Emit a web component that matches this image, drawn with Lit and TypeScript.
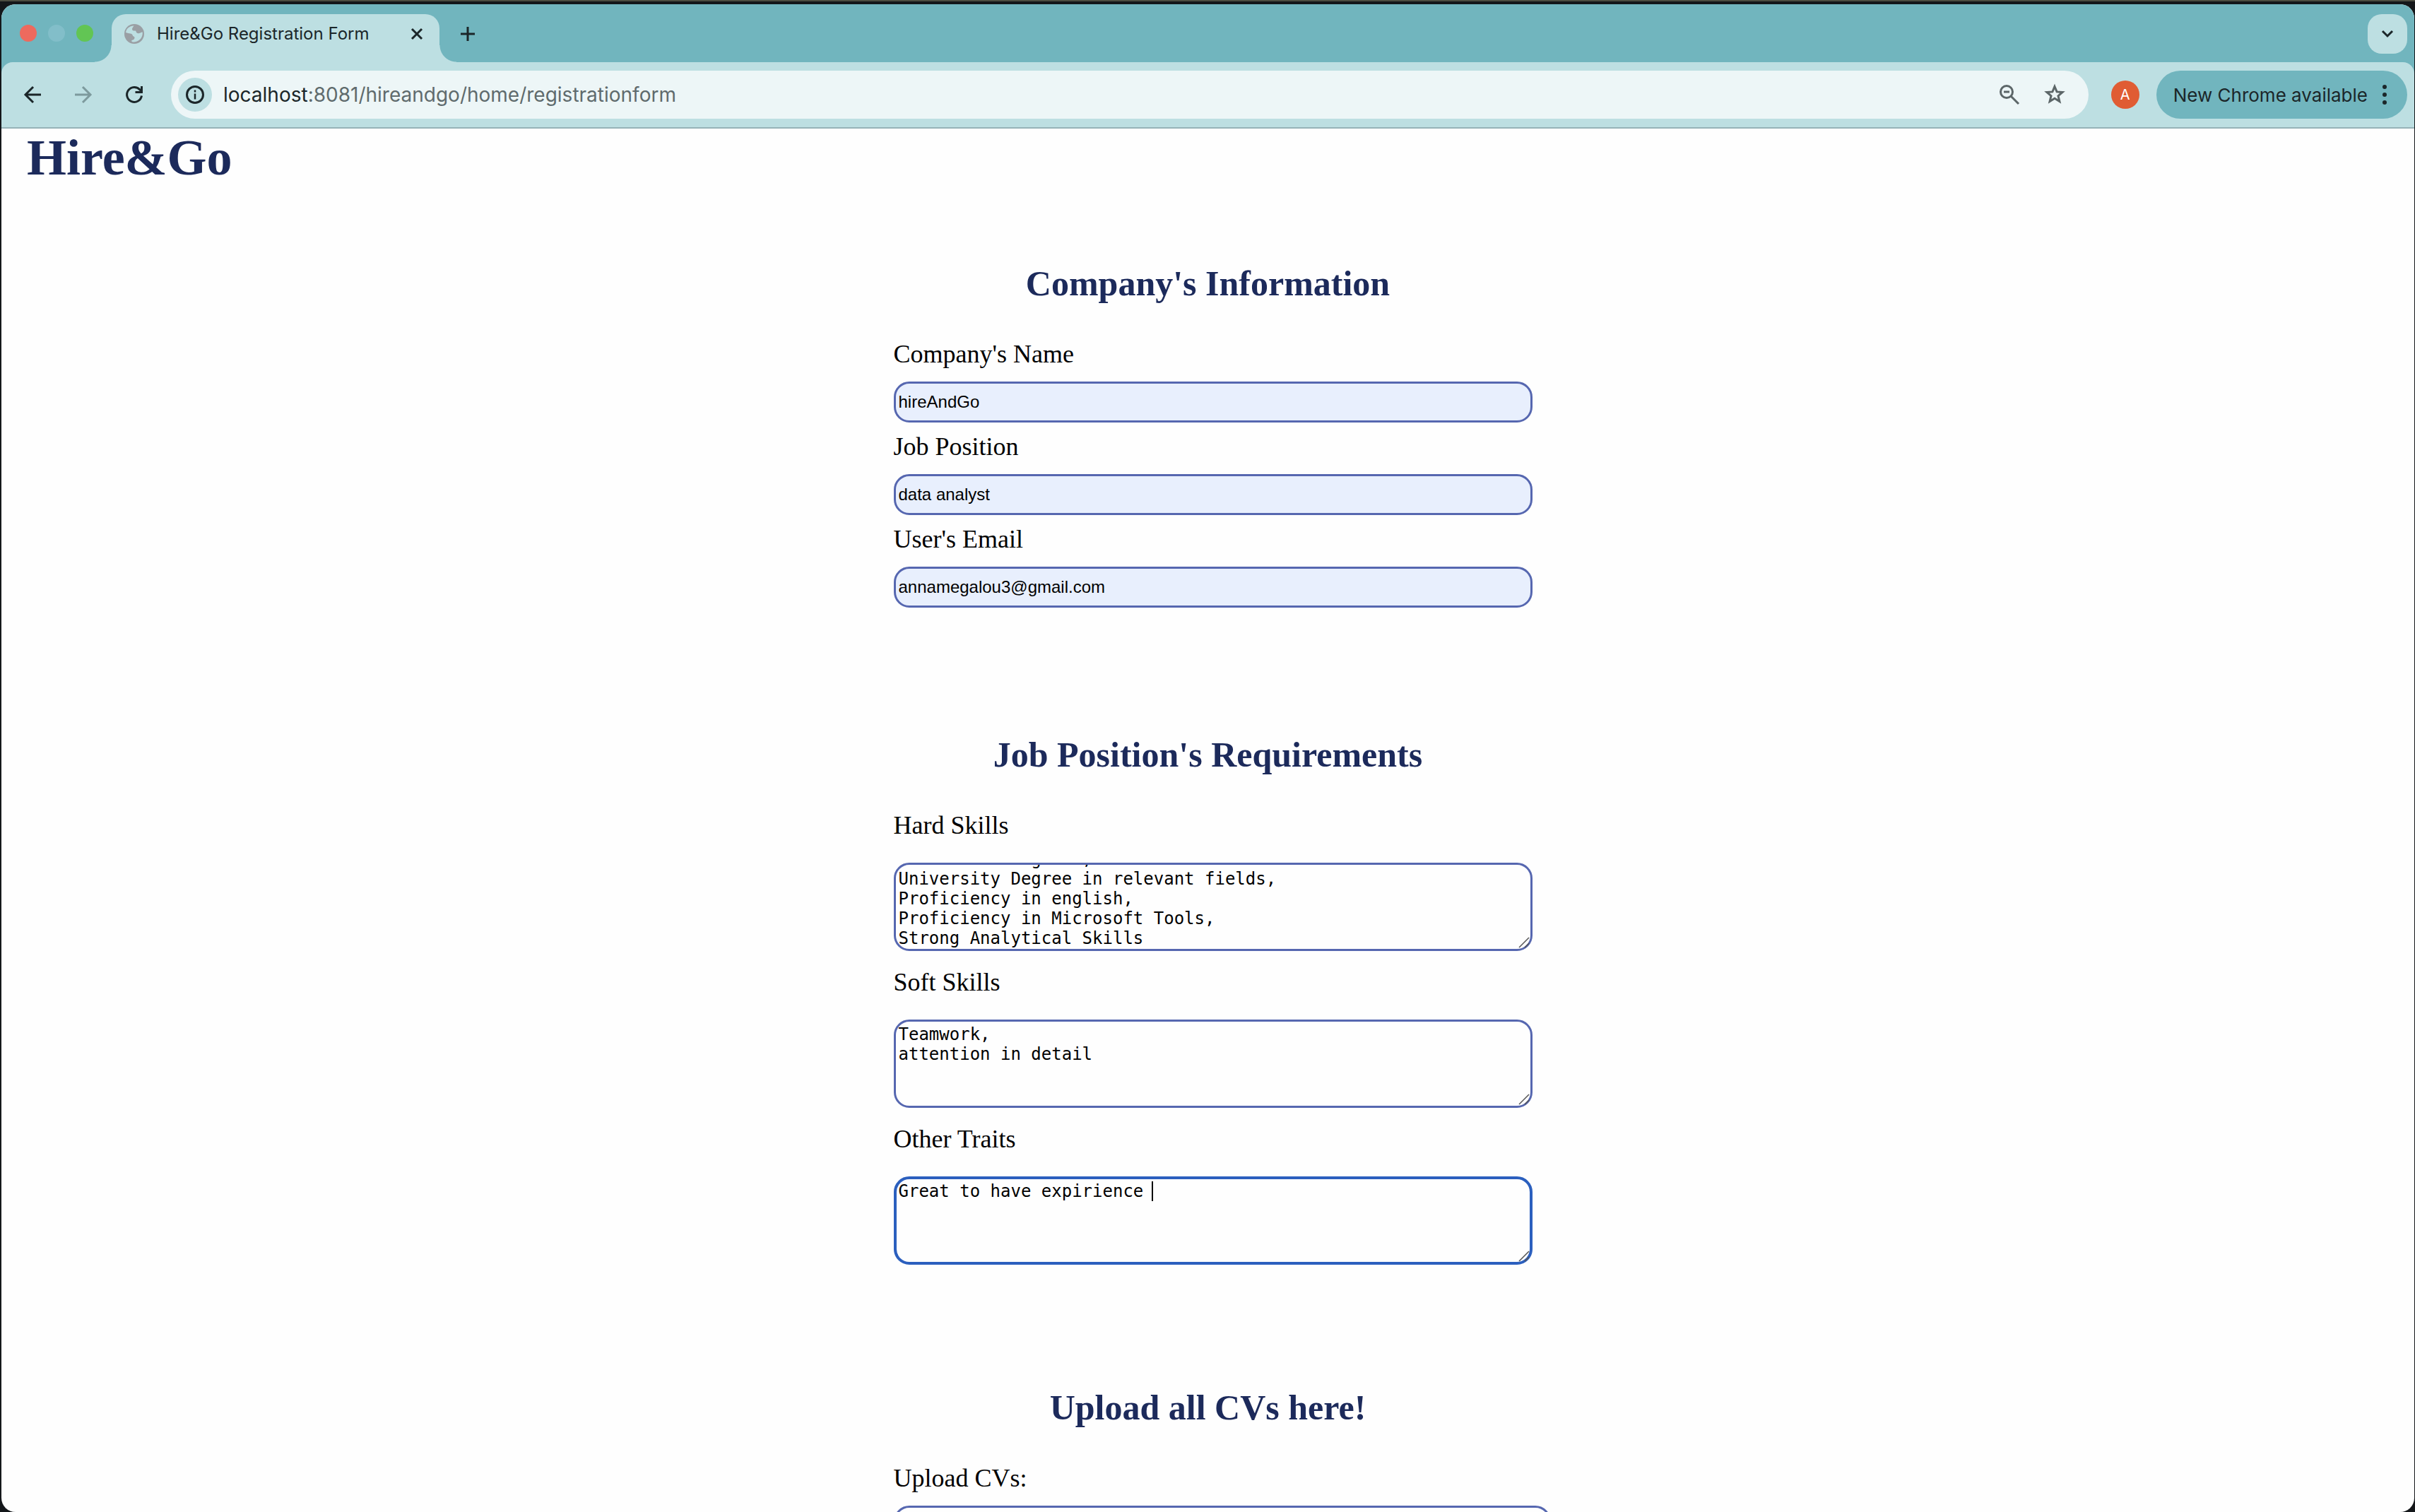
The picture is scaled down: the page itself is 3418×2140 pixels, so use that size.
import { LitElement, html, css, svg } from "lit";
import { customElement, state } from "lit/decorators.js";

const icon = (body: unknown) => html`
  <svg class="icon" viewBox="0 0 32 32" fill="none" stroke="currentColor" stroke-width="3" aria-hidden="true">${body}</svg>`;

@customElement("browser-chrome")
export class BrowserChrome extends LitElement {
  static styles = css`
    :host { display: block; font-family: Inter, "Liberation Sans", sans-serif; color: #1b2629; }
    * { box-sizing: border-box; }
    button { border: 0; padding: 0; background: none; color: inherit; font: inherit; display: flex; align-items: center; justify-content: center; flex: none; }
    .icon { display: block; flex: none; width: 32px; height: 32px; }
    .tabs { display: flex; height: 82px; background: #71b5be; padding: 14px 10px 0 26px; align-items: flex-start; }
    .lights { display: flex; gap: 16px; padding-top: 15px; margin-right: 26px; }
    .light { width: 24px; height: 24px; border-radius: 50%; }
    .close { background: #ed6a5e; }
    .min { background: #82bec9; }
    .max { background: #62c554; }
    .tab { position: relative; display: flex; align-items: center; width: 464px; height: 68px; padding: 0 16px 12px 16px; background: #bddfe2; border-radius: 20px 20px 0 0; font-size: 24px; line-height: 32px; white-space: nowrap; }
    .tab::before, .tab::after { content: ""; position: absolute; bottom: 0; width: 24px; height: 24px; }
    .tab::before { right: 100%; background: radial-gradient(circle at 0 0, transparent 23px, #bddfe2 24px); }
    .tab::after { left: 100%; background: radial-gradient(circle at 100% 0, transparent 23px, #bddfe2 24px); }
    .title { flex: 1; margin-left: 16px; }
    .plus { width: 32px; height: 56px; margin-left: 24px; }
    .down { width: 56px; height: 56px; margin-left: auto; border-radius: 20px; background: #bddfe2; }
    .corner { background: #71b5be; }
    .bar { display: flex; align-items: center; height: 94px; padding: 0 10px 0 28px; background: #bddfe2; border-bottom: 2px solid #96b3b8; border-radius: 16px 16px 0 0; }
    .nav { display: flex; gap: 40px; margin-right: 36px; }
    .muted { color: #7d9a9d; }
    .omni { flex: 1; display: flex; align-items: center; height: 68px; padding: 0 32px 0 10px; border-radius: 34px; background: #edf6f7; }
    .info { width: 48px; height: 48px; border-radius: 50%; background: #bddfe2; }
    .address { flex: 1; margin-left: 16px; font-size: 28px; line-height: 40px; }
    .url { display: block; color: #5f6b6d; }
    .host { color: #1b2629; }
    .grey { color: #5c6668; }
    .star { margin-left: 32px; }
    .avatar { width: 40px; height: 40px; margin: 0 24px 0 32px; border-radius: 50%; background: #e05c33; color: #fff; font-size: 20px; }
    .update { height: 68px; padding: 0 16px 0 24px; border-radius: 34px; background: #71b5be; font-size: 26px; gap: 8px; }
  `;

  render() {
    return html`
      <header>
        <div class="tabs">
          <div class="lights"><span class="light close"></span><span class="light min"></span><span class="light max"></span></div>
          <div class="tab">
            ${icon(svg`<circle cx="16" cy="16" r="14" fill="#9a9fa4" stroke="none"/><path d="M4 14C5 8 9 5 15.500 4.500L13.500 7.500C12.500 9 13 11 15 11.500C17 12 18 10.500 18.500 12.500C19 15 21 15.500 23 15C25 14.500 26 13 27.700 13.500C28.500 20 24 27 15.500 27.500C12 27.500 12 26 12.500 25C15 24.500 16 24 16.500 21.500C17 19.500 14 20 13.500 17.500C13 15 9 16 4 14Z" fill="#bddfe2" stroke="none"/>`)}
            <span class="title">Hire&amp;Go Registration Form</span>
            <button aria-label="Close tab">${icon(svg`<path d="M9 9l14 14M23 9L9 23"/>`)}</button>
          </div>
          <button class="plus" aria-label="New tab">${icon(svg`<path d="M16 6v20M6 16h20"/>`)}</button>
          <button class="down" aria-label="Search tabs">${icon(svg`<path d="M9 12l7 7 7-7"/>`)}</button>
        </div>
        <div class="corner">
          <div class="bar">
            <div class="nav">
              <button aria-label="Back">${icon(svg`<path d="M28 16H7M17 5L6 16l11 11"/>`)}</button>
              <button class="muted" aria-label="Forward">${icon(svg`<path d="M4 16h21M15 5l11 11-11 11"/>`)}</button>
              <button aria-label="Reload">${icon(svg`<path d="M26.500 17.500A10.500 10.500 0 1 1 24 9l2.500 2.500M26.500 4v8.500h-9"/>`)}</button>
            </div>
            <div class="omni">
              <button class="info" aria-label="Site information">${icon(svg`<circle cx="16" cy="16" r="11.500"/><path d="M16 14.500v8M16 9.500v3" stroke-width="2.500"/>`)}</button>
              <div class="address"><span class="url"><span class="host">localhost</span>:8081/hireandgo/home/registrationform</span></div>
              <button class="grey" aria-label="Zoom">${icon(svg`<circle cx="12" cy="12" r="8.500"/><path d="M18 18l11 11M8 12h8"/>`)}</button>
              <button class="grey star" aria-label="Bookmark this tab">${icon(svg`<path d="M16 4.500L19.100 11.900L27.100 12.500L21 17.700L22.900 25.500L16 21.300L9.100 25.500L11 17.700L4.900 12.500L12.900 11.900Z"/>`)}</button>
            </div>
            <button class="avatar" aria-label="Profile">A</button>
            <button class="update">New Chrome available ${icon(svg`<g fill="currentColor" stroke="none"><circle cx="16" cy="5" r="3"/><circle cx="16" cy="16" r="3"/><circle cx="16" cy="27" r="3"/></g>`)}</button>
          </div>
        </div>
      </header>`;
  }
}

interface Field { id: string; label: string; value: string; focused?: boolean; }

@customElement("registration-form")
export class RegistrationForm extends LitElement {
  @state() private info: Field[] = [
    { id: "company", label: "Company's Name", value: "hireAndGo" },
    { id: "position", label: "Job Position", value: "data analyst" },
    { id: "email", label: "User's Email", value: "annamegalou3@gmail.com" },
  ];
  @state() private skills: Field[] = [
    { id: "hard", label: "Hard Skills", value: "Bachelor's Degrees,\nUniversity Degree in relevant fields,\nProficiency in english,\nProficiency in Microsoft Tools,\nStrong Analytical Skills" },
    { id: "soft", label: "Soft Skills", value: "Teamwork,\nattention in detail" },
    { id: "other", label: "Other Traits", value: "Great to have expirience ", focused: true },
  ];

  static styles = css`
    :host { display: block; font-family: "Liberation Serif", serif; color: #000; }
    * { box-sizing: border-box; }
    .brand { margin: 0; padding: 0 36px; font-size: 72px; line-height: 82px; color: #1c2a5b; }
    .form { width: 890px; max-width: 90%; margin: 108px auto 0; }
    .group { display: flow-root; margin-bottom: 166px; }
    .tall { margin-bottom: 150px; }
    .heading { margin: 0 0 50px; font-size: 50px; line-height: 58px; text-align: center; color: #1c2a5b; }
    .row { width: calc(100% + 14px); margin-bottom: 13px; }
    .tall .row { margin-bottom: 23px; }
    .label { display: block; margin-bottom: 18px; font-size: 36px; line-height: 42px; }
    .tall .label { margin-bottom: 32px; }
    .input { display: block; width: 100%; height: 58px; padding: 2px 4px; border: 3px solid #5667b0; border-radius: 22px; background: #e8effd; color: #000; font: 24px/28px "Liberation Sans", sans-serif; }
    .box { position: relative; font: 24px/28px "DejaVu Sans Mono", monospace; }
    .area { display: block; width: 100%; height: 125px; padding: 4px; border: 3px solid #5667b0; border-radius: 22px; background: #fefefe; color: #000; font: inherit; resize: none; overflow: hidden; outline: 0; }
    .area.focused { border: 4px solid #2b5fbe; padding: 3px; }
    .grip { position: absolute; right: 4px; bottom: 4px; width: 16px; height: 16px; }
    .caret { position: absolute; left: calc(4px + 25ch); top: 7px; width: 2px; height: 28px; background: #000; }
    .file { display: block; width: calc(100% + 40px); height: 76px; padding: 16px; border: 3px solid #5667b0; border-radius: 22px; font-size: 24px; }
  `;

  firstUpdated() {
    const hard = this.renderRoot.querySelector<HTMLTextAreaElement>("#hard");
    if (hard) hard.scrollTop = hard.scrollHeight - hard.clientHeight - 3;
  }

  render() {
    return html`
      <h1 class="brand">Hire&amp;Go</h1>
      <form class="form">
        <section class="group">
          <h2 class="heading">Company's Information</h2>
          ${this.info.map((f) => html`
            <div class="row">
              <label class="label" for=${f.id}>${f.label}</label>
              <input class="input" id=${f.id} type="text" .value=${f.value} />
            </div>`)}
        </section>
        <section class="group tall">
          <h2 class="heading">Job Position's Requirements</h2>
          ${this.skills.map((f) => html`
            <div class="row">
              <label class="label" for=${f.id}>${f.label}</label>
              <div class="box">
                <textarea class="area ${f.focused ? "focused" : ""}" id=${f.id} spellcheck="false" .value=${f.value}></textarea>
                ${f.focused ? html`<span class="caret"></span>` : ""}
                <svg class="grip" viewBox="0 0 16 16" stroke="#555" stroke-width="1.500" aria-hidden="true"><path d="M1 15L15 1M9 15l6-6"/></svg>
              </div>
            </div>`)}
        </section>
        <section class="group">
          <h2 class="heading">Upload all CVs here!</h2>
          <label class="label" for="cvs">Upload CVs:</label>
          <input class="file" id="cvs" type="file" multiple />
        </section>
      </form>`;
  }
}

@customElement("app-root")
export class AppRoot extends LitElement {
  static styles = css`
    :host { display: block; height: 100vh; overflow: hidden; background: #14171a; }
    .desktop { box-sizing: border-box; height: 100%; padding: 4px 1px 0 2px; border-top: 2px solid #4b4c40; }
    .window { height: 100%; overflow: hidden; border-radius: 20px; background: #fefefe; }
  `;
  render() {
    return html`<div class="desktop"><main class="window"><browser-chrome></browser-chrome><registration-form></registration-form></main></div>`;
  }
}
